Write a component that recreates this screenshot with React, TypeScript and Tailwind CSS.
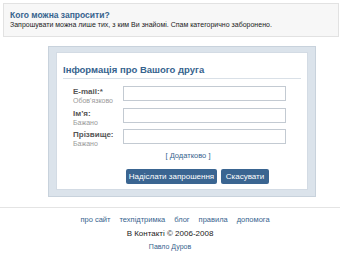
export default function App() {
  const links = ['про сайт', 'техпідтримка', 'блог', 'правила', 'допомога'];
  const rows = [
    { label: 'E-mail:*', hint: "Обов'язково" },
    { label: 'Ім’я:', hint: 'Бажано' },
    { label: 'Прізвище:', hint: 'Бажано' },
  ];

  return (
    <div className="w-[340px] h-[255px] overflow-hidden bg-white text-[8px] leading-[10px] text-[#222] [font-family:'Liberation_Sans',Arial,sans-serif]">
      {/* Notice */}
      <div className="mt-[3px] ml-[3px] mr-[1px] h-[34px] border border-[#e2e2e2] bg-[#f7f7f7] px-[6px] pt-[7px] leading-[9px]">
        <div className="text-[8.5px] font-bold text-[#36638e]">Кого можна запросити?</div>
        <div className="text-[7px] whitespace-nowrap">
          Запрошувати можна лише тих, з ким Ви знайомі. Спам категорично заборонено.
        </div>
      </div>

      {/* Form frame */}
      <div className="ml-[48px] mt-[9px] w-[268px] border border-[#c8d2dc] bg-[#dbe3eb] px-[7px] pt-[5px] pb-[6px]">
        <div className="border border-[#d3dbe4] bg-white px-[6px] pt-[11px] pb-[5px]">
          <div className="border-b border-[#d9e0e7] pb-[3px] text-[9.5px] leading-[11px] font-bold text-[#36638e]">
            Інформація про Вашого друга
          </div>
          <div className="mt-[7px] flex flex-col gap-[3.5px] pl-[10px]">
            {rows.map((r) => (
              <div key={r.label} className="flex h-[18px] items-start">
                <div className="w-[50px]">
                  <div className="pt-[1px] font-bold text-[#555]">{r.label}</div>
                  <div className="text-[7px] leading-[8px] text-[#999]">{r.hint}</div>
                </div>
                <div className="h-[15px] w-[163px] border border-[#c3cad2] bg-white" />
              </div>
            ))}
          </div>
          <div className="mt-[4px] pl-[12px] text-center text-[7.5px] text-[#36638e]">[ Додатково ]</div>
          <div className="mt-[8px] flex gap-[4px] pl-[63px]">
            <button className="h-[15px] w-[91px] rounded-[2px] bg-[#3a6591] text-[8px] text-white">
              Надіслати запрошення
            </button>
            <button className="h-[15px] w-[48px] rounded-[2px] bg-[#3a6591] text-[8px] text-white">
              Скасувати
            </button>
          </div>
        </div>
      </div>

      {/* Footer */}
      <div className="mt-[10px] border-t border-[#e4e4e4] pt-[7px] text-center">
        <div className="flex justify-center gap-[9px] pl-[10px] text-[7.5px] text-[#36638e]">
          {links.map((l) => (
            <span key={l}>{l}</span>
          ))}
        </div>
        <div className="mt-[4px] text-[8px]">В Контакті © 2006-2008</div>
        <div className="mt-[3px] text-[7px] text-[#36638e]">Павло Дуров</div>
      </div>
    </div>
  );
}
